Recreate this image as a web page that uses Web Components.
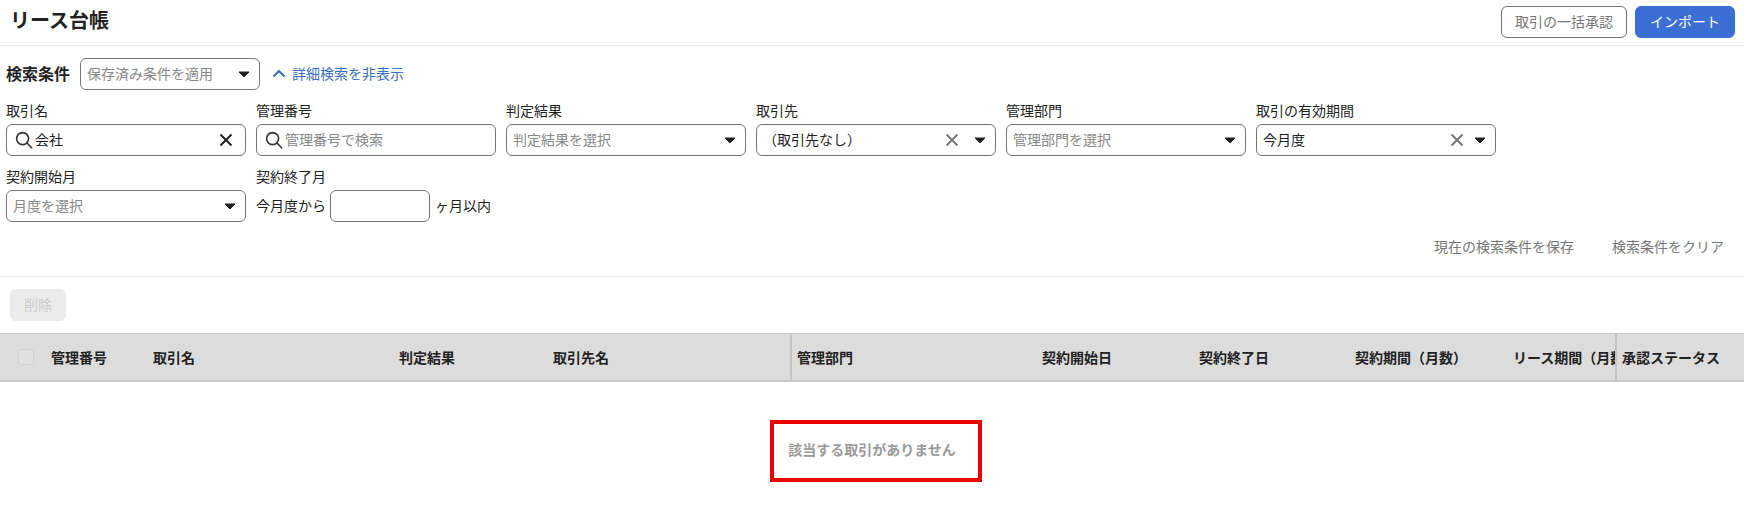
<!DOCTYPE html>
<html lang="ja">
<head>
<meta charset="utf-8">
<title>リース台帳</title>
<style>
  html, body { margin: 0; padding: 0; background: #fff; overflow: hidden; }
  body {
    font-family: "Noto Sans CJK JP", "Noto Sans", sans-serif;
    font-size: 14px;
    color: #222;
  }
</style>
</head>
<body>
<lease-page>
  <page-header title-text="リース台帳">
    <ui-button>取引の一括承認</ui-button>
    <ui-button variant="primary">インポート</ui-button>
  </page-header>

  <search-panel>
    <form-field label="取引名"><search-box value="会社"></search-box></form-field>
    <form-field label="管理番号"><search-box placeholder="管理番号で検索"></search-box></form-field>
    <form-field label="判定結果"><select-box placeholder="判定結果を選択"></select-box></form-field>
    <form-field label="取引先"><select-box value="（取引先なし）" clearable style="--cross-gap: 15px"></select-box></form-field>
    <form-field label="管理部門"><select-box placeholder="管理部門を選択"></select-box></form-field>
    <form-field label="取引の有効期間"><select-box value="今月度" clearable style="--cross-gap: 10px"></select-box></form-field>
    <form-field label="契約開始月"><select-box placeholder="月度を選択"></select-box></form-field>
    <form-field label="契約終了月"><month-range></month-range></form-field>
  </search-panel>

  <table-toolbar></table-toolbar>
  <table-head></table-head>
  <empty-state>該当する取引がありません</empty-state>
</lease-page>

<script>
// Shared icons
const ICONS = {
  search: `<svg width="18" height="18" viewBox="0 0 18 18" fill="none" stroke="#333" stroke-width="1.6" stroke-linecap="round"><circle cx="7.6" cy="7.6" r="6"/><path d="M12 12l4.6 4.8"/></svg>`,
  cross: `<svg width="14" height="14" viewBox="0 0 14 14" fill="none" stroke="currentColor" stroke-width="2"><path d="M1.5 1.5l11 11M12.5 1.5l-11 11"/></svg>`,
  caret: `<svg width="12" height="7" viewBox="0 0 12 7" fill="#222" stroke="#222" stroke-width="1" stroke-linejoin="round"><path d="M1 1h10L6 6z"/></svg>`,
  chevron: `<svg width="14" height="9" viewBox="0 0 14 9" fill="none" stroke="#3b6fc4" stroke-width="2.2"><path d="M1.5 7.5L7 2l5.5 5.5"/></svg>`,
};

// Box look shared by inputs and selects
const BOX_CSS = `
  .box {
    box-sizing: border-box;
    display: flex;
    align-items: center;
    height: 32px;
    border: 1px solid #777;
    border-radius: 6px;
    background: #fff;
    padding: 0 6px;
    font-size: 14px;
    white-space: nowrap;
  }
  .text { flex: 1; overflow: hidden; padding-bottom: 2px; }
  .placeholder { color: #888; }
`;

class LeasePage extends HTMLElement {
  constructor() {
    super();
    this.attachShadow({ mode: 'open' });
    this.shadowRoot.innerHTML = `
      <style>:host { display: block; width: 1744px; height: 512px; overflow: hidden; }</style>
      <slot></slot>
    `;
  }
}

class PageHeader extends HTMLElement {
  constructor() {
    super();
    this.attachShadow({ mode: 'open' });
  }

  connectedCallback() {
    this.shadowRoot.innerHTML = `
      <style>
        :host {
          display: flex;
          justify-content: space-between;
          align-items: flex-start;
          border-bottom: 1px solid #e8e8e8;
          padding: 6px 9px 0 10px;
          height: 39px;
        }
        h1 { margin: 0; font-size: 20px; line-height: 28px; font-weight: 700; color: #222; }
        .actions { display: flex; gap: 8px; }
      </style>
      <h1>${this.getAttribute('title-text')}</h1>
      <div class="actions"><slot></slot></div>
    `;
  }
}

class UiButton extends HTMLElement {
  constructor() {
    super();
    this.attachShadow({ mode: 'open' });
    this.shadowRoot.innerHTML = `
      <style>
        :host {
          display: inline-flex;
          align-items: center;
          justify-content: center;
          box-sizing: border-box;
          height: 32px;
          padding: 0 13px 2px;
          border: 1px solid #777;
          border-radius: 6px;
          background: #fff;
          color: #777;
          font-size: 14px;
          white-space: nowrap;
        }
        :host([variant="primary"]) {
          background: #3b6fd4;
          border-color: #3b6fd4;
          color: #fff;
          padding: 0 14px 2px;
        }
        :host([variant="disabled"]) {
          background: #ebebeb;
          border-color: #ebebeb;
          color: #ccc;
          padding: 0 13px 2px;
        }
      </style>
      <slot></slot>
    `;
  }
}

class SearchPanel extends HTMLElement {
  constructor() {
    super();
    this.attachShadow({ mode: 'open' });
    this.shadowRoot.innerHTML = `
      <style>
        :host { display: block; padding: 12px 0 20px 6px; border-bottom: 1px solid #eee; }
        .top { display: flex; align-items: center; height: 32px; }
        .title { width: 74px; font-size: 16px; font-weight: 700; color: #222; padding-bottom: 3px; }
        .saved { width: 180px; }
        .toggle {
          display: flex;
          align-items: center;
          gap: 6px;
          margin-left: 12px;
          color: #3b6fc4;
          font-size: 14px;
          padding-bottom: 2px;
        }
        .fields {
          display: grid;
          grid-template-columns: repeat(6, 240px);
          column-gap: 10px;
          row-gap: 11px;
          margin-top: 11px;
        }
        .links {
          display: flex;
          justify-content: flex-end;
          gap: 38px;
          margin: 14px 20px 0 0;
          color: #777;
          font-size: 14px;
          line-height: 20px;
        }
      </style>
      <div class="top">
        <span class="title">検索条件</span>
        <select-box class="saved" placeholder="保存済み条件を適用"></select-box>
        <span class="toggle">${ICONS.chevron}<span>詳細検索を非表示</span></span>
      </div>
      <div class="fields"><slot></slot></div>
      <div class="links">
        <span>現在の検索条件を保存</span>
        <span>検索条件をクリア</span>
      </div>
    `;
  }
}

class FormField extends HTMLElement {
  constructor() {
    super();
    this.attachShadow({ mode: 'open' });
  }

  connectedCallback() {
    this.shadowRoot.innerHTML = `
      <style>
        :host { display: block; }
        label { display: block; font-size: 14px; line-height: 18px; margin-bottom: 5px; color: #222; }
      </style>
      <label>${this.getAttribute('label')}</label>
      <slot></slot>
    `;
  }
}

class SearchBox extends HTMLElement {
  constructor() {
    super();
    this.attachShadow({ mode: 'open' });
  }

  connectedCallback() {
    const value = this.getAttribute('value');
    const placeholder = this.getAttribute('placeholder');
    this.shadowRoot.innerHTML = `
      <style>
        :host { display: block; }
        ${BOX_CSS}
        .box { padding: 0 12px 0 8px; gap: 2px; }
        .cross { display: flex; color: #222; }
      </style>
      <div class="box">
        ${ICONS.search}
        <span class="text ${value ? '' : 'placeholder'}">${value || placeholder}</span>
        ${value ? `<span class="cross">${ICONS.cross}</span>` : ''}
      </div>
    `;
  }
}

class SelectBox extends HTMLElement {
  constructor() {
    super();
    this.attachShadow({ mode: 'open' });
  }

  connectedCallback() {
    const value = this.getAttribute('value');
    const placeholder = this.getAttribute('placeholder');
    this.shadowRoot.innerHTML = `
      <style>
        :host { display: block; }
        ${BOX_CSS}
        .box { padding: 0 9px 0 6px; }
        .cross { display: flex; color: #777; margin-right: var(--cross-gap, 11px); }
        .caret { display: flex; }
      </style>
      <div class="box">
        <span class="text ${value ? '' : 'placeholder'}">${value || placeholder}</span>
        ${this.hasAttribute('clearable') ? `<span class="cross">${ICONS.cross}</span>` : ''}
        <span class="caret">${ICONS.caret}</span>
      </div>
    `;
  }
}

class MonthRange extends HTMLElement {
  constructor() {
    super();
    this.attachShadow({ mode: 'open' });
    this.shadowRoot.innerHTML = `
      <style>
        :host { display: flex; align-items: center; white-space: nowrap; font-size: 14px; color: #222; }
        ${BOX_CSS}
        .box { width: 100px; margin: 0 5px 0 4px; }
        span { padding-bottom: 2px; }
      </style>
      <span>今月度から</span>
      <div class="box"></div>
      <span>ヶ月以内</span>
    `;
  }
}

class TableToolbar extends HTMLElement {
  constructor() {
    super();
    this.attachShadow({ mode: 'open' });
    this.shadowRoot.innerHTML = `
      <style>:host { display: flex; padding: 12px 10px; }</style>
      <ui-button variant="disabled">削除</ui-button>
    `;
  }
}

class TableHead extends HTMLElement {
  constructor() {
    super();
    this.attachShadow({ mode: 'open' });
    const cols = ['管理番号', '取引名', '判定結果', '取引先名', '管理部門', '契約開始日', '契約終了日', '契約期間（月数）', 'リース期間（月数）', '承認ステータス'];
    this.shadowRoot.innerHTML = `
      <style>
        :host {
          display: grid;
          grid-template-columns: 51px 102px 246px 154px 237px 252px 157px 156px 158px 102px 1fr;
          height: 46px;
          align-items: stretch;
          background: #dcdcdc;
          border-top: 1px solid #c8c8c8;
          border-bottom: 2px solid #c8c8c8;
          font-size: 14px;
          font-weight: 700;
          color: #222;
        }
        .cell { display: flex; align-items: center; overflow: hidden; white-space: nowrap; box-sizing: border-box; padding-bottom: 1px; }
        .check { padding-left: 18px; }
        .check i {
          display: block;
          box-sizing: border-box;
          width: 16px;
          height: 16px;
          border: 1px solid #d0d0d0;
          border-radius: 3px;
          background: #e0e0e0;
        }
        .pinned { border-left: 2px solid #c4c4c4; padding-left: 5px; }
      </style>
      <div class="cell check"><i></i></div>
      ${cols.map((c, i) => `<div class="cell ${i === 4 || i === 9 ? 'pinned' : ''}">${c}</div>`).join('')}
    `;
  }
}

class EmptyState extends HTMLElement {
  constructor() {
    super();
    this.attachShadow({ mode: 'open' });
    this.shadowRoot.innerHTML = `
      <style>
        :host {
          display: flex;
          justify-content: center;
          padding-top: 56px;
          color: #999;
          font-size: 14px;
          font-weight: 700;
          line-height: 22px;
        }
        .msg { position: relative; }
        /* annotation drawn over the message */
        .mark {
          position: absolute;
          left: -18px;
          right: -26px;
          top: -18px;
          bottom: -22px;
          border: 4px solid #ee0000;
        }
      </style>
      <div class="msg"><slot></slot><div class="mark"></div></div>
    `;
  }
}

customElements.define('lease-page', LeasePage);
customElements.define('page-header', PageHeader);
customElements.define('ui-button', UiButton);
customElements.define('search-panel', SearchPanel);
customElements.define('form-field', FormField);
customElements.define('search-box', SearchBox);
customElements.define('select-box', SelectBox);
customElements.define('month-range', MonthRange);
customElements.define('table-toolbar', TableToolbar);
customElements.define('table-head', TableHead);
customElements.define('empty-state', EmptyState);
</script>
</body>
</html>
